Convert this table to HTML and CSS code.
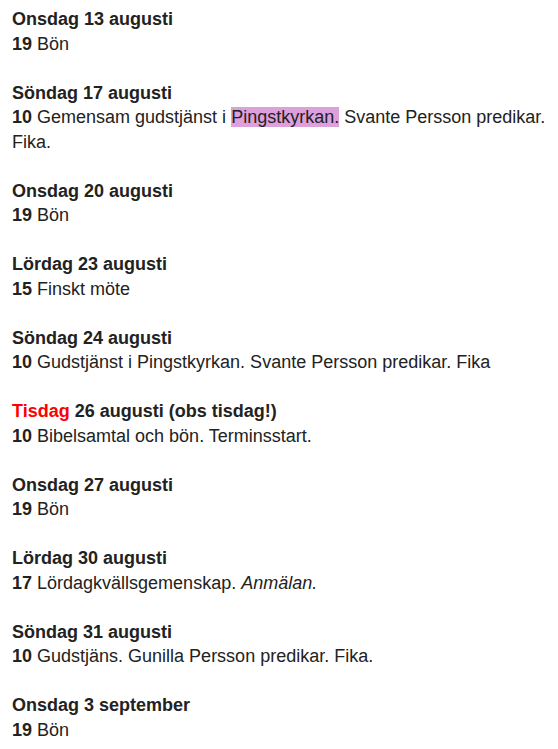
FILE: index.html
```html
<!DOCTYPE html>
<html lang="sv">
<head>
<meta charset="utf-8">
<link rel="stylesheet" href="styles.css">
</head>
<body>
<div class="list">
  <p class="item"><b>Onsdag 13 augusti</b><br><b>19</b> Bön</p>
  <p class="item"><b>Söndag 17 augusti</b><br><b>10</b> Gemensam gudstjänst i <span class="hl">Pingstkyrkan.</span> Svante Persson predikar. Fika.</p>
  <p class="item"><b>Onsdag 20 augusti</b><br><b>19</b> Bön</p>
  <p class="item"><b>Lördag 23 augusti</b><br><b>15</b> Finskt möte</p>
  <p class="item"><b>Söndag 24 augusti</b><br><b>10</b> Gudstjänst i Pingstkyrkan. Svante Persson predikar. Fika</p>
  <p class="item"><b><span class="red">Tisdag</span> 26 augusti (obs tisdag!)</b><br><b>10</b> Bibelsamtal och bön. Terminsstart.</p>
  <p class="item"><b>Onsdag 27 augusti</b><br><b>19</b> Bön</p>
  <p class="item"><b>Lördag 30 augusti</b><br><b>17</b> Lördagkvällsgemenskap. <i>Anmälan.</i></p>
  <p class="item"><b>Söndag 31 augusti</b><br><b>10</b> Gudstjäns. Gunilla Persson predikar. Fika.</p>
  <p class="item"><b>Onsdag 3 september</b><br><b>19</b> Bön</p>
</div>
</body>
</html>
```
FILE: styles.css
```css
html, body {
  margin: 0;
  padding: 0;
  background: #fff;
}
body {
  font-family: "Liberation Sans", Arial, sans-serif;
  font-size: 18px;
  line-height: 24.5px;
  color: #222;
}
.list {
  display: flex;
  flex-direction: column;
  gap: 24.5px;
  padding: 7px 8px 0 12px;
}
.item {
  margin: 0;
}
.hl {
  background: #dda0dd;
}
.red {
  color: #f00;
}
```
